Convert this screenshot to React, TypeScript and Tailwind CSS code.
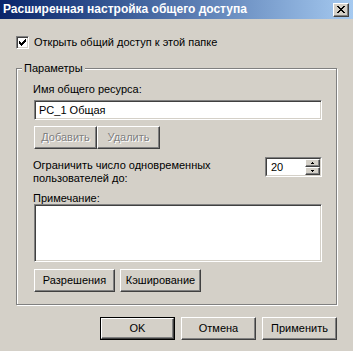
import React from "react";

const raised =
  "bg-[#d4d0c8] border border-t-white border-l-white border-r-[#404040] border-b-[#404040] shadow-[inset_-1px_-1px_0_#808080]";
const sunken =
  "bg-white border border-t-[#808080] border-l-[#808080] border-r-white border-b-white shadow-[inset_1px_1px_0_#404040,inset_-1px_-1px_0_#d4d0c8]";

function Pixels({ rows, className }: { rows: string[]; className?: string }) {
  const w = rows[0].length;
  const h = rows.length;
  return (
    <svg width={w} height={h} viewBox={`0 0 ${w} ${h}`} shapeRendering="crispEdges" className={className}>
      {rows.flatMap((r, y) =>
        r.split("").map((c, x) => (c === "X" ? <rect key={`${x}-${y}`} x={x} y={y} width={1} height={1} fill="#000" /> : null))
      )}
    </svg>
  );
}

const closeGlyph = ["XX....XX", ".XX..XX.", "..XXXX..", "...XX...", "..XXXX..", ".XX..XX.", "XX....XX"];
const checkGlyph = ["......X", ".....XX", "X...XXX", "XX.XXX.", "XXXXX..", ".XXX...", "..X...."];
const upGlyph = [".X.", "XXX"];
const downGlyph = ["XXX", ".X."];

function Button({ label, disabled, className }: { label: string; disabled?: boolean; className?: string }) {
  return (
    <div className={`${raised} h-[23px] flex items-center justify-center ${className ?? ""}`}>
      <span className={disabled ? "text-[#808080] [text-shadow:1px_1px_0_#fff]" : ""}>{label}</span>
    </div>
  );
}

export default function App() {
  return (
    <div className="w-[353px] h-[351px] bg-[#d4d0c8] flex flex-col font-['Liberation_Sans',Arial,sans-serif] text-[11px] leading-[13px] text-black overflow-hidden">
      <div className="h-[19px] flex items-center pl-[3px] pr-[4px] bg-linear-to-r from-[#0a246a] to-[#a6caf0]">
        <span className="text-white font-bold text-[12px]">Расширенная настройка общего доступа</span>
        <div className={`${raised} ml-auto w-[16px] h-[14px] flex items-center justify-center`}>
          <Pixels rows={closeGlyph} />
        </div>
      </div>

      <div className="px-[16px]">
        <div className="mt-[17px] flex items-center gap-[5px]">
          <div className={`${sunken} w-[13px] h-[13px] flex items-center justify-center`}>
            <Pixels rows={checkGlyph} />
          </div>
          <span>Открыть общий доступ к этой папке</span>
        </div>

        <div className="relative mt-[19px] w-[321px] h-[237px] border border-[#808080] shadow-[inset_1px_1px_0_#fff,1px_1px_0_#fff] pl-[17px] pt-[14px]">
          <span className="absolute left-[5px] -top-[7px] px-[2px] bg-[#d4d0c8]">Параметры</span>

          <div className="-ml-px">Имя общего ресурса:</div>
          <div className={`${sunken} mt-[4px] w-[288px] h-[20px] flex items-center pl-[4px]`}>PC_1 Общая</div>

          <div className="mt-[6px] flex">
            <Button label="Добавить" disabled className="w-[63px]" />
            <Button label="Удалить" disabled className="w-[63px]" />
          </div>

          <div className="mt-[8px] w-[288px] flex justify-between">
            <div className="-ml-px mt-[2px]">
              <div>Ограничить число одновременных</div>
              <div>пользователей до:</div>
            </div>
            <div className="w-[57px] h-[20px] border border-t-[#808080] border-l-[#808080] border-r-white border-b-white">
              <div className="h-full border border-t-[#404040] border-l-[#404040] border-r-[#d4d0c8] border-b-[#d4d0c8] bg-white flex">
                <span className="flex-1 pl-[4px] flex items-center">20</span>
                <div className="w-[15px] flex flex-col">
                  <div className={`${raised} h-[8px] flex items-center justify-center`}>
                    <Pixels rows={upGlyph} />
                  </div>
                  <div className={`${raised} h-[8px] flex items-center justify-center`}>
                    <Pixels rows={downGlyph} />
                  </div>
                </div>
              </div>
            </div>
          </div>

          <div className="-ml-px mt-[8px] leading-[11px]">Примечание:</div>
          <div className={`${sunken} w-[288px] h-[58px]`} />

          <div className="mt-[7px] flex gap-[5px]">
            <Button label="Разрешения" className="w-[81px]" />
            <Button label="Кэширование" className="w-[81px]" />
          </div>
        </div>

        <div className="mt-[12px] flex justify-end gap-[6px]">
          <div className="w-[75px] h-[23px] border border-black">
            <div className={`${raised} h-full flex items-center justify-center`}>OK</div>
          </div>
          <Button label="Отмена" className="w-[75px]" />
          <Button label="Применить" className="w-[75px]" />
        </div>
      </div>
    </div>
  );
}
